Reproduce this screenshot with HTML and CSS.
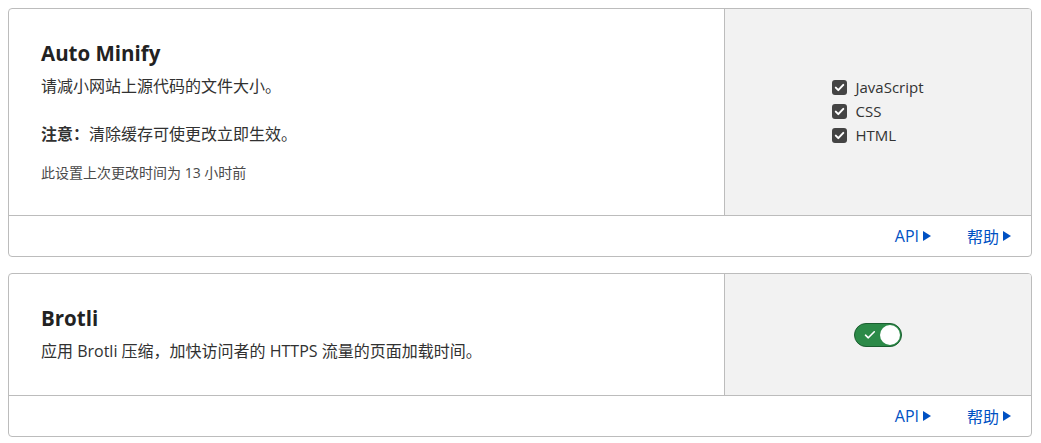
FILE: index.html
```html
<!DOCTYPE html>
<html lang="zh-CN">
<head>
    <meta charset="UTF-8">
    <title>速度 - 优化</title>
    <link rel="stylesheet" href="styles.css">
</head>
<body>
    <div class="card">
        <div class="card-main">
            <div class="card-info">
                <h3>Auto Minify</h3>
                <p class="desc">请减小网站上源代码的文件大小。</p>
                <p class="note"><strong>注意：</strong>清除缓存可使更改立即生效。</p>
                <p class="updated">此设置上次更改时间为 13 小时前</p>
            </div>
            <div class="card-control">
                <ul class="check-list">
                    <li><span class="check-box"><svg viewBox="0 0 15 15" width="15" height="15"><path d="M3.8 7.6l2.5 2.5 5-5.2" fill="none" stroke="#fff" stroke-width="2" stroke-linecap="round" stroke-linejoin="round"/></svg></span>JavaScript</li>
                    <li><span class="check-box"><svg viewBox="0 0 15 15" width="15" height="15"><path d="M3.8 7.6l2.5 2.5 5-5.2" fill="none" stroke="#fff" stroke-width="2" stroke-linecap="round" stroke-linejoin="round"/></svg></span>CSS</li>
                    <li><span class="check-box"><svg viewBox="0 0 15 15" width="15" height="15"><path d="M3.8 7.6l2.5 2.5 5-5.2" fill="none" stroke="#fff" stroke-width="2" stroke-linecap="round" stroke-linejoin="round"/></svg></span>HTML</li>
                </ul>
            </div>
        </div>
        <div class="card-footer">
            <a href="#" class="more-link">API<span class="caret"></span></a>
            <a href="#" class="more-link">帮助<span class="caret"></span></a>
        </div>
    </div>

    <div class="card">
        <div class="card-main">
            <div class="card-info">
                <h3>Brotli</h3>
                <p class="desc">应用 Brotli 压缩，加快访问者的 HTTPS 流量的页面加载时间。</p>
            </div>
            <div class="card-control">
                <div class="toggle on">
                    <svg class="toggle-check" viewBox="0 0 12 10" width="12" height="10"><path d="M1.5 5.2l2.8 2.6 6-6" fill="none" stroke="#fff" stroke-width="1.6" stroke-linecap="round" stroke-linejoin="round"/></svg>
                    <span class="toggle-knob"></span>
                </div>
            </div>
        </div>
        <div class="card-footer">
            <a href="#" class="more-link">API<span class="caret"></span></a>
            <a href="#" class="more-link">帮助<span class="caret"></span></a>
        </div>
    </div>
</body>
</html>
```

FILE: styles.css
```css
body {
    margin: 8px 9px 8px 8px;
    font-family: "Open Sans", "Noto Sans CJK SC", sans-serif;
    color: #313131;
    background: #fff;
}

.card {
    border: 1px solid #bcbcbc;
    border-radius: 4px;
    margin-bottom: 16px;
    overflow: hidden;
}

.card-main {
    display: flex;
    border-bottom: 1px solid #bcbcbc;
}

.card-info {
    flex: 1;
    padding: 32px 32px 33px 32px;
}

.card-info h3 {
    margin: 0 0 10px 0;
    font-size: 20.5px;
    line-height: 24px;
    font-weight: 700;
    color: #222;
}

.card-info p {
    margin: 0;
    font-size: 16px;
    line-height: 22px;
}

.card-info .note {
    margin-top: 26px;
}

.card-info .note strong {
    font-weight: 700;
}

.card-info .updated {
    margin-top: 19px;
    font-size: 14px;
    line-height: 18px;
    color: #4a4a4a;
}

/* 右侧控制区 */
.card-control {
    width: 306px;
    border-left: 1px solid #bcbcbc;
    background: #f2f2f2;
    display: flex;
    align-items: center;
    justify-content: center;
}

.check-list {
    list-style: none;
    margin: 0 0 2px 0;
    padding: 0;
}

.check-list li {
    display: flex;
    align-items: center;
    height: 24px;
    font-size: 15px;
    color: #333;
}

.check-box {
    width: 15px;
    height: 15px;
    border-radius: 3px;
    background: #444;
    margin-right: 8px;
    display: inline-flex;
}

.toggle {
    position: relative;
    width: 46px;
    height: 22px;
    border-radius: 12px;
    background: #2c8a48;
    border: 1px solid #1b5e30;
    display: flex;
    align-items: center;
}

.toggle-check {
    margin-left: 9px;
}

.toggle-knob {
    position: absolute;
    top: 1px;
    right: 1px;
    width: 20px;
    height: 20px;
    border-radius: 50%;
    background: #fff;
}

/* 底部链接 */
.card-footer {
    height: 40px;
    display: flex;
    align-items: center;
    justify-content: flex-end;
    gap: 36px;
    padding-right: 20px;
}

.more-link {
    display: inline-flex;
    align-items: center;
    font-size: 16px;
    color: #0051c3;
    text-decoration: none;
}

.caret {
    width: 0;
    height: 0;
    margin-left: 4px;
    border-top: 5.5px solid transparent;
    border-bottom: 5.5px solid transparent;
    border-left: 8px solid #0051c3;
}
```
